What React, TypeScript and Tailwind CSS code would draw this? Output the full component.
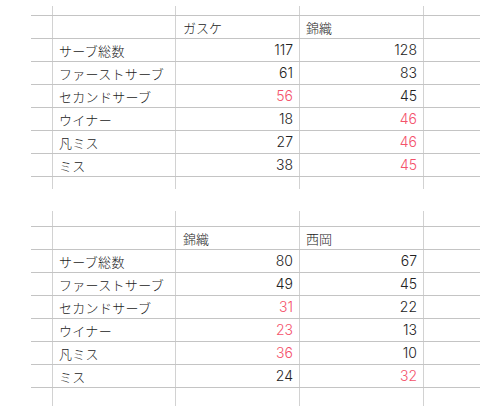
type Cell = { v: number; red?: boolean }

interface TableData {
  players: [string, string]
  rows: { label: string; a: Cell; b: Cell }[]
  tail: string
  top: string
  bottom: string
}

const tables: TableData[] = [
  {
    players: ['ガスケ', '錦織'],
    tail: 'w-[17px]',
    top: 'h-[9px]',
    bottom: 'h-[13px]',
    rows: [
      { label: 'サーブ総数', a: { v: 117 }, b: { v: 128 } },
      { label: 'ファーストサーブ', a: { v: 61 }, b: { v: 83 } },
      { label: 'セカンドサーブ', a: { v: 56, red: true }, b: { v: 45 } },
      { label: 'ウイナー', a: { v: 18 }, b: { v: 46, red: true } },
      { label: '凡ミス', a: { v: 27 }, b: { v: 46, red: true } },
      { label: 'ミス', a: { v: 38 }, b: { v: 45, red: true } },
    ],
  },
  {
    players: ['錦織', '西岡'],
    tail: 'w-[30px]',
    top: 'h-[15px]',
    bottom: 'h-[19px]',
    rows: [
      { label: 'サーブ総数', a: { v: 80 }, b: { v: 67 } },
      { label: 'ファーストサーブ', a: { v: 49 }, b: { v: 45 } },
      { label: 'セカンドサーブ', a: { v: 31, red: true }, b: { v: 22 } },
      { label: 'ウイナー', a: { v: 23, red: true }, b: { v: 13 } },
      { label: '凡ミス', a: { v: 36, red: true }, b: { v: 10 } },
      { label: 'ミス', a: { v: 24 }, b: { v: 32, red: true } },
    ],
  },
]

const vline = 'border-l border-[#d2d2d2]'

function Row({ tail, line, height = 'h-[23px]', children }: { tail: string; line: boolean; height?: string; children?: React.ReactNode[] }) {
  const cells = children ?? [null, null, null]
  return (
    <div className={`flex ${height} ${line ? 'border-t border-[#c4c4c4]' : ''}`}>
      <div className="w-[21px]" />
      <div className={`w-[123px] ${vline} flex items-center pl-[6px]`}>{cells[0]}</div>
      <div className={`w-[124px] ${vline} flex items-center`}>{cells[1]}</div>
      <div className={`w-[124px] ${vline} flex items-center`}>{cells[2]}</div>
      <div className={`${tail} ${vline}`} />
    </div>
  )
}

function Num({ c }: { c: Cell }) {
  return (
    <span
      className={`w-full text-right pr-[6px] text-[14px] font-light ${c.red ? 'text-[#f4526b]' : 'text-[#222]'}`}
      style={{ fontFamily: 'Inter, "Liberation Sans", sans-serif' }}
    >
      {c.v}
    </span>
  )
}

function StatTable({ t }: { t: TableData }) {
  return (
    <div className="flex flex-col">
      <Row tail={t.tail} line={false} height={t.top} />
      <Row tail={t.tail} line>
        {[null, <span className="pl-[7px]">{t.players[0]}</span>, <span className="pl-[6px]">{t.players[1]}</span>]}
      </Row>
      {t.rows.map(r => (
        <Row key={r.label} tail={t.tail} line>
          {[<span className="tracking-[0.3px]">{r.label}</span>, <Num c={r.a} />, <Num c={r.b} />]}
        </Row>
      ))}
      <Row tail={t.tail} line height={t.bottom} />
    </div>
  )
}

export default function App() {
  return (
    <div
      className="w-[480px] h-[418px] bg-white pl-[31px] pt-[6px] flex flex-col gap-[22px] text-[13px] text-[#222] leading-none font-light"
      style={{ fontFamily: '"Noto Sans CJK JP", "Noto Sans", sans-serif' }}
    >
      {tables.map((t, i) => (
        <StatTable key={i} t={t} />
      ))}
    </div>
  )
}
